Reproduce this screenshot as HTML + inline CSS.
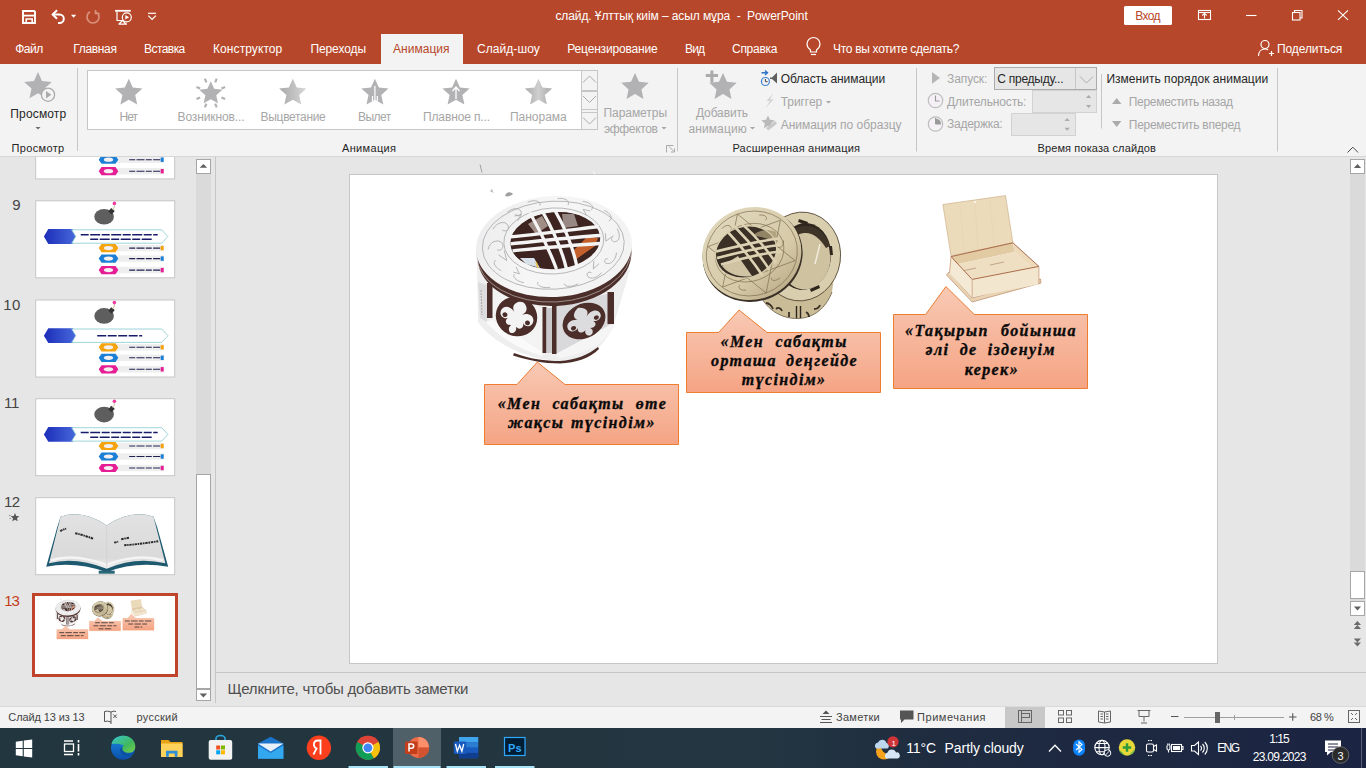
<!DOCTYPE html>
<html><head><meta charset="utf-8"><title>PowerPoint</title>
<style>html,body{margin:0;padding:0;width:1366px;height:768px;overflow:hidden;background:#E6E6E6}
svg{display:block} text{white-space:pre}</style></head>
<body><svg width="1366" height="768" viewBox="0 0 1366 768">
<rect x="0" y="0" width="1366" height="64" fill="#B7472A"/>
<rect x="0" y="64" width="1366" height="92" fill="#F3F3F3"/>
<rect x="0" y="156" width="1366" height="1" fill="#D6D6D6"/>
<rect x="0" y="157" width="1366" height="549" fill="#E6E6E6"/>
<rect x="0" y="706" width="1366" height="22" fill="#F3F3F3"/>
<rect x="0" y="706" width="1366" height="1" fill="#DADADA"/>
<defs><linearGradient id="tb" x1="0" y1="0" x2="1" y2="0"><stop offset="0" stop-color="#22363F"/><stop offset="0.55" stop-color="#233641"/><stop offset="0.68" stop-color="#1F2C40"/><stop offset="1" stop-color="#1B2442"/></linearGradient></defs>
<rect x="0" y="728" width="1366" height="40" fill="url(#tb)"/>
<rect x="1124" y="6" width="48" height="19" rx="1.5" fill="#FFFFFF"/>
<path d="M23 11 h11.2 l0.8 0.8 v11.2 h-12 z" fill="none" stroke="#FFFFFF" stroke-width="1.9"/>
<path d="M23 15.6 h12" stroke="#FFFFFF" stroke-width="1.8"/>
<path d="M26.2 23 v-4 h6 v4" fill="none" stroke="#FFFFFF" stroke-width="1.6"/>
<path d="M52.5 14.5 h7 a4.3 4.3 0 0 1 0 8.6 h-1.5" fill="none" stroke="#FFFFFF" stroke-width="2"/>
<path d="M57 10.3 l-4.3 4.2 l4.3 4.2" fill="none" stroke="#FFFFFF" stroke-width="2"/>
<path d="M71 14.8 h5.2 l-2.6 2.9 z" fill="#FFFFFF"/>
<path d="M90 11.8 a6 6 0 1 0 6.5 0.3" fill="none" stroke="#D9907C" stroke-width="1.7"/>
<path d="M95.5 10 v3.5 h4" fill="none" stroke="#D9907C" stroke-width="1.7"/>
<path d="M115 10.8 h15.8" stroke="#FFFFFF" stroke-width="1.8"/>
<g stroke="#FFFFFF" fill="none" stroke-width="1.2"><path d="M117 11.5 v9 h5"/><path d="M122.5 20.5 l-3.5 3.5 M122.5 20.5 l3.5 3.5 M118.5 24.2 h8.5"/></g>
<circle cx="126.8" cy="17.3" r="4.5" fill="#B7472A" stroke="#FFFFFF" stroke-width="1.2"/>
<path d="M125.3 15 l3.8 2.3 l-3.8 2.3 z" fill="#FFFFFF"/>
<path d="M148 13.3 h8" stroke="#FFFFFF" stroke-width="1.2"/><path d="M148.3 15.6 l3.8 3.8 l3.8 -3.8" fill="none" stroke="#FFFFFF" stroke-width="1.2"/>
<g fill="none" stroke="#FFFFFF" stroke-width="1.1"><rect x="1198.5" y="10.5" width="12" height="9"/><path d="M1198.5 12.5 h12"/><path d="M1204.5 18.5 v-5 M1202.3 15.5 l2.2 -2.2 l2.2 2.2"/><path d="M1246 15.5 h10.5"/><rect x="1292.5" y="12.5" width="7.5" height="7.5"/><path d="M1294.5 12.5 v-2 h7.5 v7.5 h-2"/><path d="M1338 10.3 l10 9.6 M1348 10.3 l-10 9.6"/></g>
<rect x="381" y="34" width="82" height="30" fill="#F3F3F3"/>
<g fill="none" stroke="#FFFFFF" stroke-width="1.2"><path d="M810.5 52 v-2 c-2.5 -1.8 -3.5 -3.5 -3.5 -6 a6.5 6.5 0 0 1 13 0 c0 2.5 -1 4.2 -3.5 6 v2 z"/><path d="M811 54.5 h5"/></g>
<g fill="none" stroke="#FFFFFF" stroke-width="1.2"><circle cx="1265" cy="44.5" r="4"/><path d="M1258.5 56 c0 -4.5 2.8 -7 6.5 -7 c1.2 0 2.3 .3 3.2 .8"/><path d="M1269 53.5 h5 M1271.5 51 v5"/></g>
<rect x="77.0" y="68" width="1" height="83" fill="#C6C6C6"/>
<rect x="677.0" y="68" width="1" height="83.5" fill="#C6C6C6"/>
<rect x="916.0" y="68" width="1" height="83.5" fill="#C6C6C6"/>
<rect x="1277.0" y="68" width="1" height="83.5" fill="#C6C6C6"/>
<rect x="1101.0" y="74" width="1" height="54.5" fill="#C6C6C6"/>
<polygon points="38.00,72.00 42.01,80.99 51.79,82.02 44.48,88.61 46.52,98.23 38.00,93.31 29.48,98.23 31.52,88.61 24.21,82.02 33.99,80.99" fill="#B2B2B5" />
<circle cx="48" cy="94.7" r="6.6" fill="#F3F3F3" stroke="#ABABAB" stroke-width="1.3"/>
<path d="M46 91 l5.3 3.7 l-5.3 3.7 z" fill="#ABABAB"/>
<path d="M35.5 127 h5 l-2.5 2.6 z" fill="#6A6A6A"/>
<rect x="87.5" y="70.5" width="510" height="59" fill="#FFFFFF" stroke="#C6C6C6"/>
<rect x="581.5" y="70.5" width="16" height="59" fill="#F3F3F3" stroke="#C6C6C6"/>
<path d="M581.5 90.5 h16 M581.5 91.5 h16 M581.5 109.5 h16 M581.5 112.5 h16" stroke="#C6C6C6"/>
<g fill="none" stroke="#ABABAB" stroke-width="1"><path d="M583 82.5 l6.5 -6.5 l6.5 6.5"/><path d="M583 96 l6.5 6.5 l6.5 -6.5"/><path d="M583 117.5 l6.5 6.5 l6.5 -6.5"/></g>
<polygon points="128.80,78.70 132.75,87.56 142.40,88.58 135.19,95.08 137.21,104.57 128.80,99.72 120.39,104.57 122.41,95.08 115.20,88.58 124.85,87.56" fill="#B2B2B5" />
<polygon points="210.80,81.30 214.17,88.86 222.40,89.73 216.25,95.27 217.97,103.37 210.80,99.23 203.63,103.37 205.35,95.27 199.20,89.73 207.43,88.86" fill="#B2B2B5" />
<path d="M215.20 82.38 L216.73 78.68" stroke="#B2B2B5" stroke-width="2.2"/><path d="M221.42 88.60 L225.12 87.07" stroke="#B2B2B5" stroke-width="2.2"/><path d="M221.42 97.40 L225.12 98.93" stroke="#B2B2B5" stroke-width="2.2"/><path d="M215.20 103.62 L216.73 107.32" stroke="#B2B2B5" stroke-width="2.2"/><path d="M206.40 103.62 L204.87 107.32" stroke="#B2B2B5" stroke-width="2.2"/><path d="M200.18 97.40 L196.48 98.93" stroke="#B2B2B5" stroke-width="2.2"/><path d="M200.18 88.60 L196.48 87.07" stroke="#B2B2B5" stroke-width="2.2"/><path d="M206.40 82.38 L204.87 78.68" stroke="#B2B2B5" stroke-width="2.2"/>
<defs><linearGradient id="fadeg" x1="0" y1="0" x2="1" y2="0"><stop offset="0" stop-color="#A9A9A9"/><stop offset="0.6" stop-color="#C4C4C4"/><stop offset="1" stop-color="#DADADA"/></linearGradient></defs>
<polygon points="292.80,78.70 296.75,87.56 306.40,88.58 299.19,95.08 301.21,104.57 292.80,99.72 284.39,104.57 286.41,95.08 279.20,88.58 288.85,87.56" fill="url(#fadeg)" />
<polygon points="374.90,78.70 378.85,87.56 388.50,88.58 381.29,95.08 383.31,104.57 374.90,99.72 366.49,104.57 368.51,95.08 361.30,88.58 370.95,87.56" fill="#B2B2B5" />
<g stroke="#FFFFFF" stroke-width="1.2"><path d="M374.9 86 v14 M372.5 96 v5 M377.3 96 v5"/></g>
<polygon points="456.00,78.70 459.95,87.56 469.60,88.58 462.39,95.08 464.41,104.57 456.00,99.72 447.59,104.57 449.61,95.08 442.40,88.58 452.05,87.56" fill="#B2B2B5" />
<path d="M456 87 v12 M452.5 91 l3.5 -4 l3.5 4" stroke="#FFFFFF" stroke-width="1.3" fill="none"/>
<defs><linearGradient id="pang" x1="0" y1="0" x2="1" y2="0"><stop offset="0" stop-color="#A9A9A9"/><stop offset="0.5" stop-color="#CFCFCF"/><stop offset="1" stop-color="#A9A9A9"/></linearGradient></defs>
<polygon points="538.50,78.70 542.45,87.56 552.10,88.58 544.89,95.08 546.91,104.57 538.50,99.72 530.09,104.57 532.11,95.08 524.90,88.58 534.55,87.56" fill="url(#pang)" />
<polygon points="635.00,72.90 638.98,81.82 648.70,82.85 641.44,89.39 643.46,98.95 635.00,94.07 626.54,98.95 628.56,89.39 621.30,82.85 631.02,81.82" fill="#B2B2B5" />
<path d="M661.5 127 h5 l-2.5 2.6 z" fill="#A6A6A6"/>
<g fill="none" stroke="#ABABAB" stroke-width="1"><path d="M666.5 152.5 v-7 h7"/><path d="M669 146.5 l5 5 M674.5 148.5 v3.5 h-3.5"/></g>
<polygon points="723.00,72.90 726.98,81.82 736.70,82.85 729.44,89.39 731.46,98.95 723.00,94.07 714.54,98.95 716.56,89.39 709.30,82.85 719.02,81.82" fill="#B2B2B5" />
<path d="M705.8 75.5 h12.2 M711.9 70.6 v12" stroke="#ABABAB" stroke-width="3"/>
<path d="M750 127 h5 l-2.5 2.6 z" fill="#A6A6A6"/>
<path d="M761.5 72.8 h6 M765 70.5 l2.5 2.3 l-2.5 2.3" stroke="#2F74C7" stroke-width="1.4" fill="none"/>
<circle cx="765.4" cy="81.5" r="4" fill="none" stroke="#3D82CF" stroke-width="1.2"/><path d="M765.4 79 v2.7 h2.2" stroke="#444" stroke-width="1" fill="none"/>
<path d="M770 77.5 h2 l5 -5 v11 l-5 -4.5 h-2 z" fill="#5F5F5F"/>
<path d="M773 93.5 l-6.5 7.5 h3.5 l-4.5 7 l8 -8.5 h-3.5 z" fill="#D2D2D2"/>
<path d="M826 101 h5 l-2.5 2.6 z" fill="#A6A6A6"/>
<polygon points="768.00,115.50 769.93,119.84 774.66,120.34 771.13,123.52 772.11,128.16 768.00,125.79 763.89,128.16 764.87,123.52 761.34,120.34 766.07,119.84" fill="#B9B9B9" />
<path d="M766 128 l9 -7 l2.2 2.5 l-9 7 z" fill="#C9C9C9"/>
<path d="M932 72 l8 5.9 l-8 5.9 z" fill="#B5B5B5"/>
<rect x="994.5" y="67.5" width="102" height="22" fill="#E6E6E6" stroke="#ABABAB"/>
<path d="M1075.5 68 v21" stroke="#C6C6C6"/>
<path d="M1080 76.5 l6.5 6.5 l6.5 -6.5" fill="none" stroke="#ABABAB" stroke-width="1"/>
<circle cx="935.5" cy="100.5" r="7.2" fill="#F5F0F5" stroke="#BDBDBD" stroke-width="1.2"/><path d="M935.5 95.5 v5.5 h4" fill="none" stroke="#9A9A9A" stroke-width="1.1"/>
<rect x="1032.5" y="90.5" width="64" height="22" fill="#E6E6E6" stroke="#D2D2D2"/>
<path d="M1086 98 h5.3 l-2.65 -3 z M1086 105 h5.3 l-2.65 3 z" fill="#ABABAB"/>
<circle cx="935.5" cy="124" r="7.2" fill="#F5F0F5" stroke="#BDBDBD" stroke-width="1.2"/><path d="M935.5 118.5 v5.5 h5.5 a5.5 5.5 0 0 0 -5.5 -5.5 z" fill="#9A9A9A"/><path d="M935.5 118 v6 h5.5" fill="none" stroke="#9A9A9A" stroke-width="1"/>
<rect x="1011.5" y="113.5" width="64" height="22" fill="#E6E6E6" stroke="#D2D2D2"/>
<path d="M1064.5 121 h5.3 l-2.65 -3 z M1064.5 127.8 h5.3 l-2.65 3 z" fill="#ABABAB"/>
<path d="M1112 104 h9.4 l-4.7 -6 z" fill="#ABABAB"/>
<path d="M1112 121 h9.4 l-4.7 6 z" fill="#ABABAB"/>
<path d="M1347.5 152.5 l5.3 -5.3 l5.3 5.3" fill="none" stroke="#444" stroke-width="1"/>
<rect x="196" y="159" width="15" height="541" fill="#DADADA"/>
<rect x="196.5" y="159.5" width="14" height="14" fill="#FFFFFF" stroke="#A6A6A6"/>
<path d="M199.6 167.8 h7.6 l-3.8 -3.9 z" fill="#606060"/>
<rect x="196.5" y="474.5" width="14" height="214" fill="#FFFFFF" stroke="#A6A6A6"/>
<rect x="196.5" y="689.5" width="14" height="11" fill="#FFFFFF" stroke="#A6A6A6"/>
<path d="M199.6 693.5 h7.6 l-3.8 3.9 z" fill="#606060"/>
<rect x="215" y="157" width="1" height="546" fill="#C6C6C6"/>
<defs><linearGradient id="hexg" x1="0" y1="0" x2="1" y2="0"><stop offset="0" stop-color="#1B2DB8"/><stop offset="1" stop-color="#4A6BDD"/></linearGradient></defs>
<svg x="0" y="157" width="216" height="546" overflow="hidden"><g transform="translate(35.2,-55.599999999999994)"><rect x="0.5" y="0.5" width="139" height="77" fill="#FFFFFF" stroke="#C6C6C6"/><ellipse cx="68.9" cy="16.4" rx="9.8" ry="7.8" fill="#5E5E5E"/><rect x="74" y="8.6" width="4.6" height="4.6" transform="rotate(40 76.3 10.9)" fill="#333"/><path d="M77.6 9.2 q2.6 -2.6 1.2 -5.6" stroke="#C9B48A" stroke-width="0.9" fill="none"/><circle cx="79.2" cy="3.1" r="1.8" fill="#F03CA0"/><path d="M8.7 36.2 l4.4 -7.4 h24.5 l4.4 7.4 l-4.4 7.4 h-24.5 z" fill="url(#hexg)"/><path d="M36.5 29.5 h90 l6.2 6.7 l-6.2 6.7 h-90 l4 -6.7 z" fill="#FFFFFF" stroke="#86C9CF" stroke-width="0.8"/><path d="M45.5 34.4 h77 M55 39 h62" stroke="#1A1A6A" stroke-width="1.5" stroke-dasharray="8 1.5 10 1.5"/><rect x="80" y="44.599999999999994" width="49" height="6.4" fill="#EEEEEE"/><rect x="125.5" y="45.599999999999994" width="3" height="4.4" fill="#F5A40F"/><path d="M63.5 47.8 l2.8 -4.1 h14 l2.8 4.1 l-2.8 4.1 h-14 z" fill="#F5A40F"/><ellipse cx="73.3" cy="47.8" rx="4.6" ry="2.1" fill="#F4F0F0"/><path d="M94 47.8 h31" stroke="#202050" stroke-width="1.1" stroke-dasharray="6 1.3 8 1.3"/><rect x="80" y="55.099999999999994" width="49" height="6.4" fill="#EEEEEE"/><rect x="125.5" y="56.099999999999994" width="3" height="4.4" fill="#1C7FD6"/><path d="M63.5 58.3 l2.8 -4.1 h14 l2.8 4.1 l-2.8 4.1 h-14 z" fill="#1C7FD6"/><ellipse cx="73.3" cy="58.3" rx="4.6" ry="2.1" fill="#F4F0F0"/><path d="M94 58.3 h31" stroke="#202050" stroke-width="1.1" stroke-dasharray="6 1.3 8 1.3"/><rect x="80" y="66.6" width="49" height="6.4" fill="#EEEEEE"/><rect x="125.5" y="67.6" width="3" height="4.4" fill="#E61E96"/><path d="M63.5 69.8 l2.8 -4.1 h14 l2.8 4.1 l-2.8 4.1 h-14 z" fill="#E61E96"/><ellipse cx="73.3" cy="69.8" rx="4.6" ry="2.1" fill="#F4F0F0"/><path d="M94 69.8 h31" stroke="#202050" stroke-width="1.1" stroke-dasharray="6 1.3 8 1.3"/></g></svg>
<g transform="translate(35.2,200.3)"><rect x="0.5" y="0.5" width="139" height="77" fill="#FFFFFF" stroke="#C6C6C6"/><ellipse cx="68.9" cy="16.4" rx="9.8" ry="7.8" fill="#5E5E5E"/><rect x="74" y="8.6" width="4.6" height="4.6" transform="rotate(40 76.3 10.9)" fill="#333"/><path d="M77.6 9.2 q2.6 -2.6 1.2 -5.6" stroke="#C9B48A" stroke-width="0.9" fill="none"/><circle cx="79.2" cy="3.1" r="1.8" fill="#F03CA0"/><path d="M8.7 36.2 l4.4 -7.4 h24.5 l4.4 7.4 l-4.4 7.4 h-24.5 z" fill="url(#hexg)"/><path d="M36.5 29.5 h90 l6.2 6.7 l-6.2 6.7 h-90 l4 -6.7 z" fill="#FFFFFF" stroke="#86C9CF" stroke-width="0.8"/><path d="M45.5 34.4 h77 M55 39 h62" stroke="#1A1A6A" stroke-width="1.5" stroke-dasharray="8 1.5 10 1.5"/><rect x="80" y="44.599999999999994" width="49" height="6.4" fill="#EEEEEE"/><rect x="125.5" y="45.599999999999994" width="3" height="4.4" fill="#F5A40F"/><path d="M63.5 47.8 l2.8 -4.1 h14 l2.8 4.1 l-2.8 4.1 h-14 z" fill="#F5A40F"/><ellipse cx="73.3" cy="47.8" rx="4.6" ry="2.1" fill="#F4F0F0"/><path d="M94 47.8 h31" stroke="#202050" stroke-width="1.1" stroke-dasharray="6 1.3 8 1.3"/><rect x="80" y="55.099999999999994" width="49" height="6.4" fill="#EEEEEE"/><rect x="125.5" y="56.099999999999994" width="3" height="4.4" fill="#1C7FD6"/><path d="M63.5 58.3 l2.8 -4.1 h14 l2.8 4.1 l-2.8 4.1 h-14 z" fill="#1C7FD6"/><ellipse cx="73.3" cy="58.3" rx="4.6" ry="2.1" fill="#F4F0F0"/><path d="M94 58.3 h31" stroke="#202050" stroke-width="1.1" stroke-dasharray="6 1.3 8 1.3"/><rect x="80" y="66.6" width="49" height="6.4" fill="#EEEEEE"/><rect x="125.5" y="67.6" width="3" height="4.4" fill="#E61E96"/><path d="M63.5 69.8 l2.8 -4.1 h14 l2.8 4.1 l-2.8 4.1 h-14 z" fill="#E61E96"/><ellipse cx="73.3" cy="69.8" rx="4.6" ry="2.1" fill="#F4F0F0"/><path d="M94 69.8 h31" stroke="#202050" stroke-width="1.1" stroke-dasharray="6 1.3 8 1.3"/></g>
<g transform="translate(35.2,299.5)"><rect x="0.5" y="0.5" width="139" height="77" fill="#FFFFFF" stroke="#C6C6C6"/><ellipse cx="68.9" cy="16.4" rx="9.8" ry="7.8" fill="#5E5E5E"/><rect x="74" y="8.6" width="4.6" height="4.6" transform="rotate(40 76.3 10.9)" fill="#333"/><path d="M77.6 9.2 q2.6 -2.6 1.2 -5.6" stroke="#C9B48A" stroke-width="0.9" fill="none"/><circle cx="79.2" cy="3.1" r="1.8" fill="#F03CA0"/><path d="M8.7 36.2 l4.4 -7.4 h24.5 l4.4 7.4 l-4.4 7.4 h-24.5 z" fill="url(#hexg)"/><path d="M36.5 29.5 h90 l6.2 6.7 l-6.2 6.7 h-90 l4 -6.7 z" fill="#FFFFFF" stroke="#86C9CF" stroke-width="0.8"/><path d="M62 36.2 h45" stroke="#1A1A6A" stroke-width="1.5" stroke-dasharray="9 1.5"/><rect x="80" y="44.599999999999994" width="49" height="6.4" fill="#EEEEEE"/><rect x="125.5" y="45.599999999999994" width="3" height="4.4" fill="#F5A40F"/><path d="M63.5 47.8 l2.8 -4.1 h14 l2.8 4.1 l-2.8 4.1 h-14 z" fill="#F5A40F"/><ellipse cx="73.3" cy="47.8" rx="4.6" ry="2.1" fill="#F4F0F0"/><path d="M94 47.8 h31" stroke="#202050" stroke-width="1.1" stroke-dasharray="6 1.3 8 1.3"/><rect x="80" y="55.099999999999994" width="49" height="6.4" fill="#EEEEEE"/><rect x="125.5" y="56.099999999999994" width="3" height="4.4" fill="#1C7FD6"/><path d="M63.5 58.3 l2.8 -4.1 h14 l2.8 4.1 l-2.8 4.1 h-14 z" fill="#1C7FD6"/><ellipse cx="73.3" cy="58.3" rx="4.6" ry="2.1" fill="#F4F0F0"/><path d="M94 58.3 h31" stroke="#202050" stroke-width="1.1" stroke-dasharray="6 1.3 8 1.3"/><rect x="80" y="66.6" width="49" height="6.4" fill="#EEEEEE"/><rect x="125.5" y="67.6" width="3" height="4.4" fill="#E61E96"/><path d="M63.5 69.8 l2.8 -4.1 h14 l2.8 4.1 l-2.8 4.1 h-14 z" fill="#E61E96"/><ellipse cx="73.3" cy="69.8" rx="4.6" ry="2.1" fill="#F4F0F0"/><path d="M94 69.8 h31" stroke="#202050" stroke-width="1.1" stroke-dasharray="6 1.3 8 1.3"/></g>
<g transform="translate(35.2,398.2)"><rect x="0.5" y="0.5" width="139" height="77" fill="#FFFFFF" stroke="#C6C6C6"/><ellipse cx="68.9" cy="16.4" rx="9.8" ry="7.8" fill="#5E5E5E"/><rect x="74" y="8.6" width="4.6" height="4.6" transform="rotate(40 76.3 10.9)" fill="#333"/><path d="M77.6 9.2 q2.6 -2.6 1.2 -5.6" stroke="#C9B48A" stroke-width="0.9" fill="none"/><circle cx="79.2" cy="3.1" r="1.8" fill="#F03CA0"/><path d="M8.7 36.2 l4.4 -7.4 h24.5 l4.4 7.4 l-4.4 7.4 h-24.5 z" fill="url(#hexg)"/><path d="M36.5 29.5 h90 l6.2 6.7 l-6.2 6.7 h-90 l4 -6.7 z" fill="#FFFFFF" stroke="#86C9CF" stroke-width="0.8"/><path d="M45.5 34.4 h77 M55 39 h62" stroke="#1A1A6A" stroke-width="1.5" stroke-dasharray="8 1.5 10 1.5"/><rect x="80" y="44.599999999999994" width="49" height="6.4" fill="#EEEEEE"/><rect x="125.5" y="45.599999999999994" width="3" height="4.4" fill="#F5A40F"/><path d="M63.5 47.8 l2.8 -4.1 h14 l2.8 4.1 l-2.8 4.1 h-14 z" fill="#F5A40F"/><ellipse cx="73.3" cy="47.8" rx="4.6" ry="2.1" fill="#F4F0F0"/><path d="M94 47.8 h31" stroke="#202050" stroke-width="1.1" stroke-dasharray="6 1.3 8 1.3"/><rect x="80" y="55.099999999999994" width="49" height="6.4" fill="#EEEEEE"/><rect x="125.5" y="56.099999999999994" width="3" height="4.4" fill="#1C7FD6"/><path d="M63.5 58.3 l2.8 -4.1 h14 l2.8 4.1 l-2.8 4.1 h-14 z" fill="#1C7FD6"/><ellipse cx="73.3" cy="58.3" rx="4.6" ry="2.1" fill="#F4F0F0"/><path d="M94 58.3 h31" stroke="#202050" stroke-width="1.1" stroke-dasharray="6 1.3 8 1.3"/><rect x="80" y="66.6" width="49" height="6.4" fill="#EEEEEE"/><rect x="125.5" y="67.6" width="3" height="4.4" fill="#E61E96"/><path d="M63.5 69.8 l2.8 -4.1 h14 l2.8 4.1 l-2.8 4.1 h-14 z" fill="#E61E96"/><ellipse cx="73.3" cy="69.8" rx="4.6" ry="2.1" fill="#F4F0F0"/><path d="M94 69.8 h31" stroke="#202050" stroke-width="1.1" stroke-dasharray="6 1.3 8 1.3"/></g>
<defs><linearGradient id="pageg" x1="0" y1="0" x2="0" y2="1"><stop offset="0" stop-color="#E2E2E2"/><stop offset="0.8" stop-color="#DADADA"/><stop offset="1" stop-color="#F0F0F0"/></linearGradient></defs>
<g transform="translate(35.2,497.2)"><rect x="0.5" y="0.5" width="139" height="77" fill="#FFFFFF" stroke="#C6C6C6"/><path d="M11 69.5 L22 30 L25.4 19.5 Q48 12 71.5 28.4 Q95 12 118.3 19.5 L122 30 L133 69.5 Q100 64 71.5 75 Q40 64 11 69.5 z" fill="#1D5A70"/><path d="M13.8 66 L25.4 19.5 Q48 12 71.5 28.4 Q95 12 118.3 19.5 L130.2 66 Q100 59 71.5 71.5 Q40 59 13.8 66 z" fill="url(#pageg)"/><path d="M16 63 Q40 56 71.5 68 Q100 56 128 63" fill="none" stroke="#F4F4F4" stroke-width="2.5"/><path d="M71.5 28.4 V70" stroke="#D0D0D0" stroke-width="0.8"/><rect x="63.5" y="73.5" width="16" height="3" fill="#2A6578"/><g fill="none" stroke="#2A2A2A" stroke-width="1.9" stroke-dasharray="2.5 0.7 1.5 0.7"><path d="M25 34 q3 -2 6 -2.5 M40 36 q9 2 18 5.5 M79 45.5 l4 -1 M86 42 l8 -1.5 M89 48 q16 -1 34 -4"/></g></g>
<rect x="33.5" y="594.5" width="143" height="81" fill="#FFFFFF" stroke="#C0442A" stroke-width="3"/>
<polygon points="15.00,513.00 16.22,515.93 19.37,516.18 16.97,518.24 17.70,521.32 15.00,519.67 12.30,521.32 13.03,518.24 10.63,516.18 13.78,515.93" fill="#555555" />
<path d="M9 515.5 h1.6 M9.5 518.5 h1.4" stroke="#777" stroke-width="0.8"/>
<rect x="1350" y="159" width="15" height="457" fill="#DADADA"/>
<rect x="1350.5" y="159.5" width="14" height="14" fill="#FFFFFF" stroke="#A6A6A6"/>
<path d="M1353.9 167.9 h7.2 l-3.6 -4 z" fill="#606060"/>
<rect x="1350.5" y="571.5" width="14" height="27" fill="#FFFFFF" stroke="#A6A6A6"/>
<rect x="1350.5" y="601.5" width="14" height="14" fill="#FFFFFF" stroke="#A6A6A6"/>
<path d="M1353.9 606.5 h7.2 l-3.6 4 z" fill="#606060"/>
<path d="M1353.8 625 h7.2 l-3.6 -4 z M1353.8 629 h7.2 l-3.6 -4 z M1353.8 638.5 h7.2 l-3.6 4 z M1353.8 642.5 h7.2 l-3.6 4 z" fill="#6A6A6A"/>
<rect x="349.5" y="174.5" width="868" height="489" fill="#FFFFFF" stroke="#C6C6C6"/>
<rect x="216" y="672" width="1150" height="1" fill="#C6C6C6"/>
<g fill="none" stroke="#555" stroke-width="1"><path d="M104.5 711.5 q3 -1 6.5 0.5 v10 q-3.5 -1.5 -6.5 -0.5 z"/><path d="M111 712 q3 -1.5 5 -0.5 M111 722 v2"/></g>
<path d="M113.3 714.5 l3.5 3.5 M116.8 714.5 l-3.5 3.5" stroke="#555" stroke-width="1"/>
<g stroke="#555" stroke-width="1.2"><path d="M820 716.5 h12 M821.5 719.5 h9 M820 722.5 h12"/></g><path d="M822.5 714 l3.5 -3.5 l3.5 3.5 z" fill="#555"/>
<path d="M900 710.5 h13.5 v9 h-9 l-3.5 3.5 v-3.5 h-1 z" fill="#555555"/>
<rect x="1005" y="707" width="40" height="21" fill="#C8C8C8"/>
<g fill="none" stroke="#666" stroke-width="1"><rect x="1018.5" y="710.5" width="13" height="12"/><rect x="1021.5" y="713.5" width="8" height="4"/><path d="M1021.5 710.5 v12"/></g>
<g fill="none" stroke="#666" stroke-width="1"><rect x="1058.5" y="710.5" width="5" height="4.5"/><rect x="1066.5" y="710.5" width="5" height="4.5"/><rect x="1058.5" y="718" width="5" height="4.5"/><rect x="1066.5" y="718" width="5" height="4.5"/></g>
<g fill="none" stroke="#666" stroke-width="1"><path d="M1098.5 711 l6 1 l6 -1 v11 l-6 1 l-6 -1 z M1104.5 712 v11 M1100.5 714 h2.5 M1100.5 716.5 h2.5 M1100.5 719 h2.5 M1106 714 h2.5 M1106 716.5 h2.5 M1106 719 h2.5"/></g>
<g fill="none" stroke="#666" stroke-width="1"><path d="M1137.5 710.5 h13 M1139 710.5 v6 h10 v-6 M1144 716.5 v5 M1141 723 h6"/></g>
<path d="M1171 716.5 h7.5" stroke="#555" stroke-width="1"/>
<path d="M1184 717.5 h100" stroke="#A0A0A0" stroke-width="1"/>
<path d="M1234.5 715 v5" stroke="#A0A0A0" stroke-width="1"/>
<rect x="1215" y="712" width="5" height="11" fill="#666666"/>
<path d="M1289 717 h7.5 M1292.75 713.2 v7.6" stroke="#555" stroke-width="1.1"/>
<g fill="none" stroke="#666" stroke-width="1"><rect x="1348.5" y="710.5" width="11" height="12"/><path d="M1351 713 l2 2 M1357 713 l-2 2 M1351 720 l2 -2 M1357 720 l-2 -2"/></g>
<path d="M15.8 741.8 l6.9 -1 v7.2 h-6.9 z M23.8 740.6 l8.4 -1.2 v8.6 h-8.4 z M15.8 749 h6.9 v7.2 l-6.9 -1 z M23.8 749 h8.4 v8.6 l-8.4 -1.2 z" fill="#FFFFFF"/>
<g fill="none" stroke="#FFFFFF" stroke-width="1.3"><path d="M64 741 h9 M64 754.5 h9"/><rect x="64.5" y="744" width="9" height="7.5"/><path d="M78.5 740 v2.5 M78.5 744 v7.5 M78.5 753 v2.5" stroke-width="1.6"/></g>
<defs><linearGradient id="edg1" x1="0" y1="0" x2="1" y2="1"><stop offset="0" stop-color="#37C6D0"/><stop offset="0.6" stop-color="#41B85E"/><stop offset="1" stop-color="#7AD04A"/></linearGradient><linearGradient id="edg2" x1="0" y1="0" x2="0" y2="1"><stop offset="0" stop-color="#1C8AE0"/><stop offset="1" stop-color="#0B4FA8"/></linearGradient></defs>
<circle cx="123" cy="747.8" r="12" fill="url(#edg2)"/>
<path d="M111.5 744 C113 737 120 735.5 124 735.8 C131 736.2 135.5 741 135.3 747 C135.2 751 132 752.8 128.5 752.8 C125 752.8 122 751 122 748.5 C122 747 123 746.2 124 745.5 C121 744 117 743.5 111.5 744 z" fill="url(#edg1)"/>
<path d="M120 750 C120 754 123.5 756.5 127.5 756.3 C131 756 133.5 754 134.5 751.8 C132 754 126.5 754.5 124 752 C122.5 750.8 122 748.5 122.5 747 C121 747.5 120 748.5 120 750 z" fill="#0B4F9E" opacity="0.8"/>
<path d="M161 740 h7.5 l2 2 h12 v15 h-21.5 z" fill="#E8A317"/>
<rect x="161" y="743.5" width="21.5" height="13.5" fill="#FFD35B"/>
<path d="M166 756.8 v-6 h11.5 v6 h-2.8 v-3.3 h-5.9 v3.3 z" fill="#2D8FD8"/>
<path d="M216 741 v-2.5 a4.5 3 0 0 1 9 0 v2.5" fill="none" stroke="#29A8E0" stroke-width="1.6"/>
<rect x="208.7" y="740" width="23.5" height="19.8" rx="2" fill="#F2F2F2"/>
<rect x="216.2" y="745.5" width="4" height="4" fill="#F25022"/><rect x="221" y="745.5" width="4" height="4" fill="#7FBA00"/><rect x="216.2" y="750.3" width="4" height="4" fill="#00A4EF"/><rect x="221" y="750.3" width="4" height="4" fill="#FFB900"/>
<path d="M258 743.5 l12.7 -6.8 l12.7 6.8 v15.3 h-25.4 z" fill="#1B74C9"/>
<path d="M258 743.5 l12.7 8 l12.7 -8" fill="#FFFFFF" opacity="0.9"/>
<path d="M258 745.5 l12.7 7.5 l12.7 -7.5 v13.3 h-25.4 z" fill="#33A8EF"/>
<circle cx="318.9" cy="747.8" r="12.2" fill="#FC3F1D"/>
<path d="M320.5 754.5 v-14 h-2.3 c-2.7 0 -4.3 1.5 -4.3 4 c0 2 1 3.3 2.7 4 l-3.2 6" fill="none" stroke="#FFFFFF" stroke-width="1.8"/>
<circle cx="367.9" cy="747.8" r="12.1" fill="#DB4437"/>
<path d="M367.9 747.8 L357.4 753.85 A12.1 12.1 0 0 0 373.95 758.28 z" fill="#0F9D58"/>
<path d="M367.9 747.8 L373.95 758.28 A12.1 12.1 0 0 0 378.38 741.75 z" fill="#F4C20D"/>
<path d="M367.9 747.8 L357.4 753.85 A12.1 12.1 0 0 1 357.4 741.75 z" fill="#0F9D58"/>
<path d="M367.9 747.8 L357.4 741.75 A12.1 12.1 0 0 1 378.38 741.75 z" fill="#DB4437"/>
<circle cx="367.9" cy="747.8" r="5.6" fill="#FFFFFF"/><circle cx="367.9" cy="747.8" r="4.4" fill="#4285F4"/>
<rect x="393" y="728" width="48" height="40" fill="#4F6068"/>
<circle cx="418.5" cy="747.6" r="10.6" fill="#ED6C47"/>
<path d="M418.5 737 a10.6 10.6 0 0 1 10.6 10.6 h-10.6 z" fill="#FF8F6B"/>
<path d="M418.5 747.6 h10.6 a10.6 10.6 0 0 1 -10.6 10.6 z" fill="#D35230"/>
<rect x="405" y="741.5" width="12.5" height="12.5" rx="1" fill="#C43E1C"/>
<path d="M409 751.5 v-7.5 h2.6 a2.1 2.1 0 0 1 0 4.2 h-2.6" fill="none" stroke="#FFFFFF" stroke-width="1.5"/>
<rect x="459" y="737" width="19.2" height="21.2" rx="1" fill="#185ABD"/>
<rect x="459" y="737" width="19.2" height="5.3" fill="#41A5EE"/><rect x="459" y="742.3" width="19.2" height="5.3" fill="#2B7CD3"/><rect x="459" y="747.6" width="19.2" height="5.3" fill="#185ABD"/><rect x="459" y="752.9" width="19.2" height="5.3" fill="#103F91"/>
<rect x="453.8" y="741.5" width="12.5" height="12.5" rx="1" fill="#185ABD"/>
<path d="M455.5 744 l1.8 7.3 l2.3 -6 l2.3 6 l1.8 -7.3" fill="none" stroke="#FFFFFF" stroke-width="1.3"/>
<rect x="504.5" y="737.5" width="20.5" height="18" fill="#001D34" stroke="#31A8FF" stroke-width="1.2"/>
<rect x="348.5" y="766" width="39.5" height="2" fill="#A8E2F6"/>
<rect x="393.5" y="766" width="47.0" height="2" fill="#A8E2F6"/>
<rect x="446.5" y="766" width="39.5" height="2" fill="#A8E2F6"/>
<rect x="495" y="766" width="39.5" height="2" fill="#A8E2F6"/>
<circle cx="884" cy="751.5" r="8" fill="#F7A21B"/><circle cx="888.5" cy="746.5" r="7.5" fill="#22303F"/>
<path d="M876 748.5 a3.5 3.5 0 0 1 2 -6 a4.5 4.5 0 0 1 8.5 0.5 a3 3 0 0 1 1 5.5 z" fill="#BDD7EE"/>
<path d="M886 758.5 a3.5 3.5 0 0 1 1.5 -6 a4.5 4.5 0 0 1 8.5 0 a3 3 0 0 1 1.5 6 z" fill="#D6E6F5"/>
<circle cx="893" cy="741.8" r="5.6" fill="#D13438"/>
<path d="M1049 751.5 l6 -6.2 l6 6.2" fill="none" stroke="#FFFFFF" stroke-width="1.3"/>
<rect x="1073.2" y="739.6" width="11.8" height="16.2" rx="5.9" fill="#0A84FF"/>
<path d="M1076 744 l6 5.5 l-3 2.7 v-10.4 l3 2.7 l-6 5.5" fill="none" stroke="#FFFFFF" stroke-width="1.1"/>
<g fill="none" stroke="#FFFFFF" stroke-width="1.1"><circle cx="1102" cy="747.6" r="7.2"/><ellipse cx="1102" cy="747.6" rx="3" ry="7.2"/><path d="M1094.8 747.6 h14.4 M1096 743.5 h12 M1096 751.7 h8"/></g><circle cx="1107.5" cy="753" r="3.3" fill="#1C2740" stroke="#FFFFFF" stroke-width="1"/><path d="M1105.5 755 l4 -4" stroke="#FFFFFF" stroke-width="0.9"/>
<clipPath id="gclip"><circle cx="1127" cy="747.5" r="8.2"/></clipPath><circle cx="1127" cy="747.5" r="8.2" fill="#E8D83A"/><g clip-path="url(#gclip)"><path d="M1117 749 c4 2 8 6 10 10 l-12 2 z" fill="#3DA53D"/><path d="M1137 746 c-3 4 -7 8 -12 13 l14 0 z" fill="#7BC043"/></g>
<path d="M1122.8 747.5 h8.4 M1127 743.3 v8.4" stroke="#2E9A3A" stroke-width="2.4"/>
<g fill="none" stroke="#FFFFFF" stroke-width="1.1"><rect x="1146.5" y="744" width="7" height="8" rx="1.5"/><path d="M1153.5 746.5 l3 -1.5 v6 l-3 -1.5"/><path d="M1148 740.5 h5 M1148 755.5 h5" stroke-dasharray="1.5 1"/></g>
<g fill="none" stroke="#FFFFFF" stroke-width="1.1"><rect x="1171.5" y="744.5" width="10" height="7"/><path d="M1181.5 746.5 h1.5 v3 h-1.5"/><path d="M1167 745.5 v3 a1.5 1.5 0 0 0 3 0 v-3 M1168.5 750 v2.5 M1167.8 743.5 v2 M1169.3 743.5 v2"/></g><rect x="1173" y="746" width="7" height="4" fill="#FFFFFF"/>
<g fill="none" stroke="#FFFFFF" stroke-width="1.1"><path d="M1191.5 745.5 h3 l4 -3.5 v12.5 l-4 -3.5 h-3 z"/><path d="M1200.5 746 a3 3 0 0 1 0 4.5 M1202.5 744 a6 6 0 0 1 0 8.5 M1204.8 742 a9 9 0 0 1 0 12.5"/></g>
<path d="M1325 740.5 h16 v11.5 h-10 l-4 3.5 v-3.5 h-2 z" fill="#FFFFFF"/>
<path d="M1328 744 h10 M1328 747 h10 M1328 750 h6" stroke="#1C2541" stroke-width="1"/>
<circle cx="1340.5" cy="755" r="8.3" fill="#2B2B2B" stroke="#777" stroke-width="0.8"/>
<rect x="1361" y="728" width="1" height="40" fill="#5A6070"/>
<g id="slidecontent"><defs><linearGradient id="calg" x1="0" y1="0" x2="0" y2="1"><stop offset="0" stop-color="#F8C9B4"/><stop offset="1" stop-color="#F5A484"/></linearGradient><linearGradient id="lid1" x1="0" y1="0" x2="1" y2="0.3"><stop offset="0" stop-color="#EBEBED"/><stop offset="0.5" stop-color="#F6F6F6"/><stop offset="1" stop-color="#F3F3F3"/></linearGradient><linearGradient id="body1" x1="0" y1="0" x2="1" y2="0"><stop offset="0" stop-color="#D9D9DB"/><stop offset="0.35" stop-color="#F4F4F4"/><stop offset="1" stop-color="#E8E8E8"/></linearGradient><radialGradient id="hole1" cx="0.6" cy="0.7" r="0.7"><stop offset="0" stop-color="#D8743A"/><stop offset="0.5" stop-color="#8A4A2E"/><stop offset="1" stop-color="#4A2A22"/></radialGradient><linearGradient id="wood2" x1="0.2" y1="0" x2="0.6" y2="1"><stop offset="0" stop-color="#E0D7BB"/><stop offset="0.7" stop-color="#D6CAA8"/><stop offset="1" stop-color="#BFB08C"/></linearGradient><linearGradient id="wood3" x1="0" y1="0" x2="1" y2="1"><stop offset="0" stop-color="#EEDDBF"/><stop offset="1" stop-color="#E3CBA3"/></linearGradient></defs><g><path d="M477 262 L478 322 C492 342 522 358 560 361.5 C586 360 602 350 613 327 L630 270 Z" fill="#EEEEEF"/><path d="M478 282 L487 285 L487 322 L480 318 Z" fill="#DCDCDE"/><path d="M481 290 l1 25" stroke="#9A9A9A" stroke-width="0.8" stroke-dasharray="2 1"/><path d="M492.5 288 L542.5 309 L542.5 352 L492.5 320 Z" fill="#F3F3F3"/><path d="M556 305 L610 293.5 L610 325 L556 354 Z" fill="#D9D9DB"/><path d="M492.5 320 L542.5 352 L542 356 C520 350 500 338 486 322 Z" fill="#FAFAFA"/><path d="M556 354 L610 325 L614 326 C604 344 590 352 560 358 Z" fill="#F5F5F5"/><path d="M514 353 C530 359 545 361 560 361 C575 360 588 355 598 347 L599 349 C590 358 576 363 560 363.5 C543 363.5 528 360 513 355.5 Z" fill="#4B2D29"/><ellipse cx="516.5" cy="316.5" rx="21" ry="19.5" transform="rotate(25 516.5 316.5)" fill="#4B2D29"/><ellipse cx="584" cy="321" rx="22.5" ry="17" transform="rotate(-28 584 321)" fill="#4B2D29"/><path transform="translate(517 316.5) rotate(20) scale(1 0.95)" d="M0 -17 C7 -14 9 -8 4 -3.5 C9 -8 16 -7 17 -1 C18 5 12 8 8 4.5 C11 9 7 13 2.5 10.5 C5 14 3 18 0 18.5 C-3 18 -5 14 -2.5 10.5 C-7 13 -11 9 -8 4.5 C-12 8 -18 5 -17 -1 C-16 -7 -9 -8 -4 -3.5 C-9 -8 -7 -14 0 -17 Z" fill="#F3F3F3"/><path transform="translate(517 316.5) rotate(20) scale(1 0.95)" d="M-12 0 a2.5 2.5 0 1 0 0.1 0 M12 0 a2.5 2.5 0 1 0 0.1 0" fill="#4B2D29"/><path transform="translate(584 321) rotate(-25) scale(1.05 0.85)" d="M0 -17 C7 -14 9 -8 4 -3.5 C9 -8 16 -7 17 -1 C18 5 12 8 8 4.5 C11 9 7 13 2.5 10.5 C5 14 3 18 0 18.5 C-3 18 -5 14 -2.5 10.5 C-7 13 -11 9 -8 4.5 C-12 8 -18 5 -17 -1 C-16 -7 -9 -8 -4 -3.5 C-9 -8 -7 -14 0 -17 Z" fill="#DCDCDE"/><path transform="translate(584 321) rotate(-25) scale(1.05 0.85)" d="M-12 0 a2.5 2.5 0 1 0 0.1 0 M12 0 a2.5 2.5 0 1 0 0.1 0" fill="#4B2D29"/><path d="M487 283 h5.5 v35 h-5.5 z" fill="#4B2D29"/><path d="M542.5 307 h4 v46 h-4 z" fill="#4B2D29"/><path d="M546.5 308 h6 v45 h-6 z" fill="#C9C9CB"/><path d="M552 306 h4.5 v48 h-4.5 z" fill="#4B2D29"/><path d="M607.5 292 h6.5 v32 h-6.5 z" fill="#4B2D29"/><ellipse cx="554.5" cy="255" rx="77" ry="51" fill="#4B2D29" transform="rotate(-3 554.5 255)"/><ellipse cx="554" cy="251.5" rx="77.5" ry="50.5" fill="none" stroke="#CFC8C6" stroke-width="0.6" transform="rotate(-3 554 251.5)"/><ellipse cx="554" cy="246.5" rx="78" ry="50.5" fill="url(#lid1)" transform="rotate(-3 554 246.5)"/><g transform="rotate(-3 553.3 245.2)" fill="none" stroke="#A3A3A5" stroke-width="0.75"><ellipse cx="553.3" cy="245.2" rx="71" ry="44"/><ellipse cx="554" cy="241" rx="50" ry="33"/><path d="M488 246 c2 -8 10 -10 14 -6 c3 4 -1 9 -5 7 M494 226 c4 -7 13 -8 15 -3 c2 5 -4 7 -6 4 M509 210 c6 -5 14 -4 14 1 c0 4 -5 4 -6 1 M530 201 c7 -3 14 0 12 4 M560 199 c7 -1 13 3 10 7 M585 203 c7 1 12 6 8 9 M606 213 c6 3 9 9 4 11 M618 232 c3 6 2 13 -3 13 c-4 0 -4 -5 -1 -6 M616 256 c-1 7 -6 12 -11 10 c-3 -2 0 -6 2 -4 M600 275 c-4 5 -11 7 -14 3 c-2 -4 3 -5 4 -3 M576 285 c-6 3 -13 3 -14 -1 M548 287 c-7 1 -14 -2 -12 -6 M522 281 c-6 -1 -12 -6 -9 -9 M500 268 c-5 -3 -9 -8 -5 -11"/><path d="M498 252 l8 6 l-2 -10 M512 270 l6 2 l-3 -7 M598 266 l-6 5 l1 -8 M612 240 l-6 4 l0 -8 M516 214 l7 -1 l-4 6 M592 213 l-7 -2 l3 6"/></g><ellipse cx="555.3" cy="240.6" rx="45.6" ry="29" fill="#3E2420" transform="rotate(-5 555.3 240.6)"/><path d="M528 224 l14 -8 l6 10 l-12 8 z" fill="#B9A9A0" opacity="0.8"/><path d="M562 214 l12 0 l4 12 l-14 2 z" fill="#BDB3AE" opacity="0.7"/><path d="M575 260 l20 -14 l3 -8 l-10 -2 l-16 16 z" fill="#C4602C"/><path d="M520 258 l6 6 l14 4 l-6 -10 z" fill="#D8E0EA"/><path d="M536 262 l2 6" stroke="#E8C040" stroke-width="1.5"/><g fill="none" stroke="#F4F4F4" stroke-width="3.3"><path d="M510 236.8 C540 234 570 230 599 226.5"/><path d="M510.5 243.8 C540 241 572 237 600.5 235.5"/><path d="M512.5 250.8 C542 248 572 245 600 243.5"/><path d="M529.8 212.5 C541 232 550 252 556.5 269"/><path d="M542.5 211.5 C553 230 562 250 566.5 269"/><path d="M555.5 211.5 C565 228 573 248 577 267"/></g><ellipse cx="555.3" cy="240.6" rx="45.6" ry="29" fill="none" stroke="#F4F4F4" stroke-width="1.2" transform="rotate(-5 555.3 240.6)"/><path d="M480 164.5 l2 8" stroke="#9A9A9A" stroke-width="0.9"/><path d="M593 171 l2 3.5" stroke="#F4F4F4" stroke-width="1.2"/><path d="M490 191 l2 -2 l1.5 4 z" fill="#B8B8B8"/><path d="M505 196 c1 -4 5 -5 8 -2 c-2 2 -5 3 -8 2 z" fill="#A0A0A0"/></g><g><path d="M758 290 C764 308 780 319 798 318.5 C814 318 826 308 832 292 L836 262 L770 270 Z" fill="#C9BC97"/><path d="M758 290 C764 308 780 319 798 318.5 C814 318 826 308 832 292" fill="none" stroke="#6A5A42" stroke-width="0.8"/><g stroke="#3A3026" stroke-width="1.8" fill="none"><path d="M766 303 c3 0 6 3 7 6 M776 309 c2 -2 5 -1 6 2 M789 312 l0 5 M806 312 c2 1 3 3 3 5 M814 309 c3 0 5 -1 6 -4"/></g><path d="M796.5 306 v12 M800.5 306 v12" stroke="#2E261C" stroke-width="1.4"/><ellipse cx="801" cy="256.5" rx="39.5" ry="44.5" fill="#D9CEAE" stroke="#4A3C2C" stroke-width="0.8" transform="rotate(8 801 256.5)"/><ellipse cx="804" cy="256.5" rx="27" ry="33.5" fill="#2F271E" transform="rotate(8 804 256.5)"/><ellipse cx="805.5" cy="258.5" rx="25" ry="31" fill="#CFC2A0" transform="rotate(8 805.5 258.5)"/><path d="M780 250 C782 236 792 226 806 226 C818 226 826 234 830 246 L826 248 C820 238 812 232 804 233 C794 234 786 242 784 252 Z" fill="#3E3428"/><path d="M790 238 c3 -4 7 -3 8 0 M804 234 c3 0 6 2 5 5" fill="none" stroke="#D6CAA8" stroke-width="1.1"/><path d="M820 244 l-5 20" stroke="#F2EDE0" stroke-width="1.4"/><path d="M799 219 l9 3 l-1 3 l-9 -3 z M829 246 l3 0 l1 9 l-3 0 z M810 289 l9 -4 l1 3 l-9 4 z" fill="#2E261C"/><ellipse cx="752.6" cy="255" rx="50.5" ry="46.5" fill="#3A3026" transform="rotate(-20 752.6 255)"/><ellipse cx="751.8" cy="253.5" rx="50" ry="46" fill="url(#wood2)" transform="rotate(-20 751.8 253.5)"/><g transform="rotate(-20 751.8 253.5)" fill="none" stroke="#7A6A4C" stroke-width="0.6"><ellipse cx="751.8" cy="253.5" rx="46" ry="42"/><ellipse cx="750" cy="252" rx="35" ry="28.5"/><path d="M751.8 211.5 L790 275 L713 275 Z M751.8 295.5 L713 232 L790 232 Z"/><path d="M718 252 c2 -5 7 -6 9 -3 c1 3 -2 5 -4 3 M732 220 c5 -3 10 -1 9 3 M772 220 c5 1 8 5 4 7 M786 252 c-1 5 -5 7 -8 4 M770 286 c-5 2 -10 0 -8 -3 M734 286 c-5 -1 -8 -5 -4 -7"/></g><ellipse cx="746" cy="252" rx="31" ry="25.5" fill="#3A3026" transform="rotate(-18 746 252)"/><path d="M722 266 c6 8 18 12 30 10 c-4 -6 -10 -14 -14 -20 z" fill="#CFC3A4"/><path d="M752 236 c10 0 20 4 26 6 l-2 -10 c-8 -4 -18 -2 -24 4 z" fill="#A89A76" opacity="0.8"/><g fill="none" stroke="#DCD2B3" stroke-width="2.6"><path d="M716 251.5 C735 247 758 241 779 238.5"/><path d="M717 258 C737 253 760 247 780 245"/><path d="M721 264.5 C740 259 762 253 781 251.5"/><path d="M726.5 230.5 C740 245 752 260 762.5 275.5"/><path d="M734 226 C748 240 760 255 769.5 270"/><path d="M742 224 C756 236 767 250 776 263"/></g><ellipse cx="746" cy="252" rx="31" ry="25.5" fill="none" stroke="#D9CEAE" stroke-width="1.2" transform="rotate(-18 746 252)"/></g><g><path d="M946.5 275 L972.2 302 L1041 283 L1040.5 279 L972.2 298 L949 272 Z" fill="#E8D3B4" stroke="#B98A64" stroke-width="0.7"/><path d="M942.9 204.5 L1005.5 195.6 L1012.9 242.8 L951 255.8 Z" fill="#ECDBBB" stroke="#C8A880" stroke-width="0.6"/><path d="M960 206 l4 46 M975 203 l3 48 M990 200 l4 46" stroke="#E6D3B2" stroke-width="0.8"/><path d="M951 256.6 L1012.9 242.8 L1014.5 252 L956 264.5 Z" fill="#E2CAA3"/><path d="M1012.9 242.8 L1038.9 266.4 L1032.5 268 L1014.5 252 Z" fill="#ECDABA"/><path d="M956 264.5 L1014.5 252 L1032.5 268 L975 281 Z" fill="#EEDFC3"/><path d="M962 271 l14 -3 M990 265 l14 -3" stroke="#B89676" stroke-width="0.8"/><path d="M951 256.6 L972.2 279.4 L972.2 297.3 L949 273 Z" fill="#F4E9D4"/><path d="M972.2 279.4 L1038.9 266.4 L1038.9 284.3 L972.2 297.3 Z" fill="#F3E6CE"/><path d="M951 256.6 L1012.9 242.8 L1038.9 266.4 L972.2 279.4 Z" fill="none" stroke="#A35E3A" stroke-width="0.9"/><path d="M972.2 279.4 V297.3 M951 256.6 L949.5 273 M1038.9 266.4 V284.3" fill="none" stroke="#C99A7A" stroke-width="0.8"/><circle cx="975" cy="202" r="1" fill="#FFFFFF"/></g><path d="M484.5 384.5 H517 L537.3 362.1 L565 384.5 H678.5 V444.5 H484.5 Z" fill="url(#calg)" stroke="#ED7D31" stroke-width="1"/><path d="M686.5 332.5 H718.7 L739 310 L767 332.5 H880.5 V392.5 H686.5 Z" fill="url(#calg)" stroke="#ED7D31" stroke-width="1"/><path d="M893.5 314.5 H925.6 L945.9 286.6 L974.3 314.5 H1087.5 V388.5 H893.5 Z" fill="url(#calg)" stroke="#ED7D31" stroke-width="1"/></g>
<text x="555.40" y="20.20" font-family="Liberation Sans" font-size="12" font-weight="normal" font-style="normal" fill="#FFFFFF" letter-spacing="-0.085" word-spacing="0.000" >слайд. Ұлттық киім – асыл мұра  -  PowerPoint</text>
<text x="1135.30" y="19.70" font-family="Liberation Sans" font-size="12" font-weight="normal" font-style="normal" fill="#B7472A" letter-spacing="-0.615" word-spacing="0.000" >Вход</text>
<text x="15.20" y="53.20" font-family="Liberation Sans" font-size="12" font-weight="normal" font-style="normal" fill="#FFFFFF" letter-spacing="-0.467" word-spacing="0.000" >Файл</text>
<text x="73.20" y="53.20" font-family="Liberation Sans" font-size="12" font-weight="normal" font-style="normal" fill="#FFFFFF" letter-spacing="-0.313" word-spacing="0.000" >Главная</text>
<text x="144.00" y="53.20" font-family="Liberation Sans" font-size="12" font-weight="normal" font-style="normal" fill="#FFFFFF" letter-spacing="-0.555" word-spacing="0.000" >Вставка</text>
<text x="213.00" y="53.20" font-family="Liberation Sans" font-size="12" font-weight="normal" font-style="normal" fill="#FFFFFF" letter-spacing="0.085" word-spacing="0.000" >Конструктор</text>
<text x="310.40" y="53.20" font-family="Liberation Sans" font-size="12" font-weight="normal" font-style="normal" fill="#FFFFFF" letter-spacing="-0.094" word-spacing="0.000" >Переходы</text>
<text x="476.90" y="53.20" font-family="Liberation Sans" font-size="12" font-weight="normal" font-style="normal" fill="#FFFFFF" letter-spacing="0.086" word-spacing="0.000" >Слайд-шоу</text>
<text x="567.30" y="53.20" font-family="Liberation Sans" font-size="12" font-weight="normal" font-style="normal" fill="#FFFFFF" letter-spacing="-0.176" word-spacing="0.000" >Рецензирование</text>
<text x="685.00" y="53.20" font-family="Liberation Sans" font-size="12" font-weight="normal" font-style="normal" fill="#FFFFFF" letter-spacing="-0.854" word-spacing="0.000" >Вид</text>
<text x="732.00" y="53.20" font-family="Liberation Sans" font-size="12" font-weight="normal" font-style="normal" fill="#FFFFFF" letter-spacing="-0.283" word-spacing="0.000" >Справка</text>
<text x="833.00" y="53.20" font-family="Liberation Sans" font-size="12" font-weight="normal" font-style="normal" fill="#FFFFFF" letter-spacing="-0.299" word-spacing="0.000" >Что вы хотите сделать?</text>
<text x="1277.00" y="53.20" font-family="Liberation Sans" font-size="12" font-weight="normal" font-style="normal" fill="#FFFFFF" letter-spacing="-0.107" word-spacing="0.000" >Поделиться</text>
<text x="393.00" y="53.20" font-family="Liberation Sans" font-size="12" font-weight="normal" font-style="normal" fill="#B7472A" letter-spacing="0.024" word-spacing="0.000" >Анимация</text>
<text x="10.30" y="117.50" font-family="Liberation Sans" font-size="12" font-weight="normal" font-style="normal" fill="#262626" letter-spacing="0.153" word-spacing="0.000" >Просмотр</text>
<text x="11.40" y="152.00" font-family="Liberation Sans" font-size="11" font-weight="normal" font-style="normal" fill="#262626" letter-spacing="0.369" word-spacing="0.000" >Просмотр</text>
<text x="119.60" y="121.40" font-family="Liberation Sans" font-size="12" font-weight="normal" font-style="normal" fill="#A6A6A6" letter-spacing="-1.021" word-spacing="0.000" >Нет</text>
<text x="177.50" y="121.40" font-family="Liberation Sans" font-size="12" font-weight="normal" font-style="normal" fill="#A6A6A6" letter-spacing="-0.106" word-spacing="0.000" >Возникнов...</text>
<text x="260.60" y="121.40" font-family="Liberation Sans" font-size="12" font-weight="normal" font-style="normal" fill="#A6A6A6" letter-spacing="-0.320" word-spacing="0.000" >Выцветание</text>
<text x="358.00" y="121.40" font-family="Liberation Sans" font-size="12" font-weight="normal" font-style="normal" fill="#A6A6A6" letter-spacing="-0.527" word-spacing="0.000" >Вылет</text>
<text x="423.00" y="121.40" font-family="Liberation Sans" font-size="12" font-weight="normal" font-style="normal" fill="#A6A6A6" letter-spacing="-0.132" word-spacing="0.000" >Плавное п...</text>
<text x="510.00" y="121.40" font-family="Liberation Sans" font-size="12" font-weight="normal" font-style="normal" fill="#A6A6A6" letter-spacing="-0.028" word-spacing="0.000" >Панорама</text>
<text x="603.50" y="117.00" font-family="Liberation Sans" font-size="12" font-weight="normal" font-style="normal" fill="#A6A6A6" letter-spacing="-0.055" word-spacing="0.000" >Параметры</text>
<text x="603.90" y="132.80" font-family="Liberation Sans" font-size="12" font-weight="normal" font-style="normal" fill="#A6A6A6" letter-spacing="-0.323" word-spacing="0.000" >эффектов</text>
<text x="342.00" y="152.00" font-family="Liberation Sans" font-size="11" font-weight="normal" font-style="normal" fill="#262626" letter-spacing="0.331" word-spacing="0.000" >Анимация</text>
<text x="696.00" y="117.00" font-family="Liberation Sans" font-size="12" font-weight="normal" font-style="normal" fill="#A6A6A6" letter-spacing="-0.140" word-spacing="0.000" >Добавить</text>
<text x="688.40" y="132.80" font-family="Liberation Sans" font-size="12" font-weight="normal" font-style="normal" fill="#A6A6A6" letter-spacing="0.114" word-spacing="0.000" >анимацию</text>
<text x="780.70" y="83.00" font-family="Liberation Sans" font-size="12" font-weight="normal" font-style="normal" fill="#262626" letter-spacing="-0.082" word-spacing="0.000" >Область анимации</text>
<text x="780.70" y="106.00" font-family="Liberation Sans" font-size="12" font-weight="normal" font-style="normal" fill="#A6A6A6" letter-spacing="-0.066" word-spacing="0.000" >Триггер</text>
<text x="780.70" y="128.70" font-family="Liberation Sans" font-size="12" font-weight="normal" font-style="normal" fill="#A6A6A6" letter-spacing="-0.028" word-spacing="0.000" >Анимация по образцу</text>
<text x="732.40" y="152.00" font-family="Liberation Sans" font-size="11" font-weight="normal" font-style="normal" fill="#262626" letter-spacing="0.219" word-spacing="0.000" >Расширенная анимация</text>
<text x="947.10" y="83.00" font-family="Liberation Sans" font-size="12" font-weight="normal" font-style="normal" fill="#A6A6A6" letter-spacing="-0.106" word-spacing="0.000" >Запуск:</text>
<text x="997.30" y="83.00" font-family="Liberation Sans" font-size="12" font-weight="normal" font-style="normal" fill="#262626" letter-spacing="-0.253" word-spacing="0.000" >С предыду...</text>
<text x="947.10" y="106.20" font-family="Liberation Sans" font-size="12" font-weight="normal" font-style="normal" fill="#A6A6A6" letter-spacing="-0.148" word-spacing="0.000" >Длительность:</text>
<text x="947.10" y="128.40" font-family="Liberation Sans" font-size="12" font-weight="normal" font-style="normal" fill="#A6A6A6" letter-spacing="-0.286" word-spacing="0.000" >Задержка:</text>
<text x="1106.40" y="83.10" font-family="Liberation Sans" font-size="12" font-weight="normal" font-style="normal" fill="#262626" letter-spacing="0.028" word-spacing="0.000" >Изменить порядок анимации</text>
<text x="1128.80" y="105.90" font-family="Liberation Sans" font-size="12" font-weight="normal" font-style="normal" fill="#A6A6A6" letter-spacing="-0.312" word-spacing="0.000" >Переместить назад</text>
<text x="1128.80" y="128.80" font-family="Liberation Sans" font-size="12" font-weight="normal" font-style="normal" fill="#A6A6A6" letter-spacing="-0.275" word-spacing="0.000" >Переместить вперед</text>
<text x="1037.50" y="152.00" font-family="Liberation Sans" font-size="11" font-weight="normal" font-style="normal" fill="#262626" letter-spacing="0.116" word-spacing="0.000" >Время показа слайдов</text>
<text x="12.30" y="209.80" font-family="Liberation Sans" font-size="15" font-weight="normal" font-style="normal" fill="#444444" letter-spacing="0.000" word-spacing="0.000" >9</text>
<text x="3.20" y="309.60" font-family="Liberation Sans" font-size="15" font-weight="normal" font-style="normal" fill="#444444" letter-spacing="0.458" word-spacing="0.000" >10</text>
<text x="4.00" y="407.80" font-family="Liberation Sans" font-size="15" font-weight="normal" font-style="normal" fill="#444444" letter-spacing="-0.129" word-spacing="0.000" >11</text>
<text x="4.00" y="506.90" font-family="Liberation Sans" font-size="15" font-weight="normal" font-style="normal" fill="#444444" letter-spacing="-0.542" word-spacing="0.000" >12</text>
<text x="4.30" y="605.80" font-family="Liberation Sans" font-size="15" font-weight="normal" font-style="normal" fill="#C43E1C" letter-spacing="-1.142" word-spacing="0.000" >13</text>
<text x="227.40" y="694.00" font-family="Liberation Sans" font-size="15" font-weight="normal" font-style="normal" fill="#505050" letter-spacing="-0.218" word-spacing="0.000" >Щелкните, чтобы добавить заметки</text>
<text x="8.30" y="720.80" font-family="Liberation Sans" font-size="11" font-weight="normal" font-style="normal" fill="#444444" letter-spacing="-0.112" word-spacing="0.000" >Слайд 13 из 13</text>
<text x="136.60" y="720.80" font-family="Liberation Sans" font-size="11" font-weight="normal" font-style="normal" fill="#444444" letter-spacing="0.262" word-spacing="0.000" >русский</text>
<text x="836.00" y="720.80" font-family="Liberation Sans" font-size="11" font-weight="normal" font-style="normal" fill="#444444" letter-spacing="0.279" word-spacing="0.000" >Заметки</text>
<text x="917.00" y="720.80" font-family="Liberation Sans" font-size="11" font-weight="normal" font-style="normal" fill="#444444" letter-spacing="0.561" word-spacing="0.000" >Примечания</text>
<text x="1310.00" y="720.80" font-family="Liberation Sans" font-size="11" font-weight="normal" font-style="normal" fill="#444444" letter-spacing="-0.431" word-spacing="0.000" >68 %</text>
<text x="508.00" y="751.50" font-family="Liberation Sans" font-size="11" font-weight="bold" font-style="normal" fill="#31A8FF" letter-spacing="0.163" word-spacing="0.000" >Ps</text>
<text x="891.50" y="745.50" font-family="Liberation Sans" font-size="8" font-weight="normal" font-style="normal" fill="#FFFFFF" letter-spacing="0.000" word-spacing="0.000" >1</text>
<text x="906.20" y="753.40" font-family="Liberation Sans" font-size="14" font-weight="normal" font-style="normal" fill="#FFFFFF" letter-spacing="-0.111" word-spacing="0.000" >11°C</text>
<text x="944.60" y="753.40" font-family="Liberation Sans" font-size="14" font-weight="normal" font-style="normal" fill="#FFFFFF" letter-spacing="-0.079" word-spacing="0.000" >Partly cloudy</text>
<text x="1217.20" y="751.80" font-family="Liberation Sans" font-size="12" font-weight="normal" font-style="normal" fill="#FFFFFF" letter-spacing="-1.585" word-spacing="0.000" >ENG</text>
<text x="1269.30" y="743.20" font-family="Liberation Sans" font-size="12" font-weight="normal" font-style="normal" fill="#FFFFFF" letter-spacing="-0.994" word-spacing="0.000" >1:15</text>
<text x="1252.80" y="761.00" font-family="Liberation Sans" font-size="12" font-weight="normal" font-style="normal" fill="#FFFFFF" letter-spacing="-0.709" word-spacing="0.000" >23.09.2023</text>
<text x="1337.50" y="759.50" font-family="Liberation Sans" font-size="11" font-weight="normal" font-style="normal" fill="#FFFFFF" letter-spacing="0.000" word-spacing="0.000" >3</text>
<text x="497.70" y="408.90" font-family="Liberation Serif" font-size="16" font-weight="bold" font-style="italic" fill="#0A0A0A" letter-spacing="1.400" word-spacing="5.727" stroke="#0A0A0A" stroke-width="0.35">«Мен сабақты өте</text>
<text x="508.00" y="427.70" font-family="Liberation Serif" font-size="16" font-weight="bold" font-style="italic" fill="#0A0A0A" letter-spacing="1.400" word-spacing="1.245" stroke="#0A0A0A" stroke-width="0.35">жақсы түсіндім»</text>
<text x="720.50" y="346.80" font-family="Liberation Serif" font-size="16" font-weight="bold" font-style="italic" fill="#0A0A0A" letter-spacing="1.400" word-spacing="6.089" stroke="#0A0A0A" stroke-width="0.35">«Мен сабақты</text>
<text x="711.00" y="365.80" font-family="Liberation Serif" font-size="16" font-weight="bold" font-style="italic" fill="#0A0A0A" letter-spacing="1.400" word-spacing="3.672" stroke="#0A0A0A" stroke-width="0.35">орташа деңгейде</text>
<text x="741.70" y="385.40" font-family="Liberation Serif" font-size="16" font-weight="bold" font-style="italic" fill="#0A0A0A" letter-spacing="1.400" word-spacing="0.000" stroke="#0A0A0A" stroke-width="0.35">түсіндім»</text>
<text x="905.10" y="336.00" font-family="Liberation Serif" font-size="16" font-weight="bold" font-style="italic" fill="#0A0A0A" letter-spacing="1.400" word-spacing="6.909" stroke="#0A0A0A" stroke-width="0.35">«Тақырып бойынша</text>
<text x="925.50" y="355.00" font-family="Liberation Serif" font-size="16" font-weight="bold" font-style="italic" fill="#0A0A0A" letter-spacing="1.400" word-spacing="4.779" stroke="#0A0A0A" stroke-width="0.35">әлі де ізденуім</text>
<text x="964.70" y="374.60" font-family="Liberation Serif" font-size="16" font-weight="bold" font-style="italic" fill="#0A0A0A" letter-spacing="1.400" word-spacing="0.000" stroke="#0A0A0A" stroke-width="0.35">керек»</text>
<g transform="translate(35,596) scale(0.1613 0.1597) translate(-349.5,-174.5)"><use href="#slidecontent"/><path d="M500 404 h160 M510 423 h140 M722 342 h122 M712 361 h142 M744 380 h78 M907 331 h166 M928 350 h124 M966 369 h48" stroke="#1A1A1A" stroke-width="4.5" stroke-dasharray="30 8 40 8"/></g>
</svg></body></html>
